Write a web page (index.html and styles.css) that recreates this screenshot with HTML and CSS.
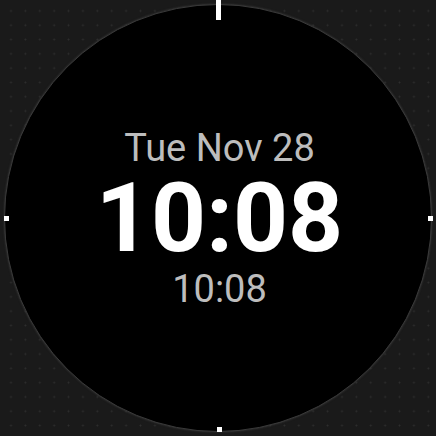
FILE: index.html
```html
<!DOCTYPE html>
<html>
<head>
<meta charset="utf-8">
<link rel="stylesheet" href="styles.css">
</head>
<body>
<div class="screen">
  <div class="face">
    <div class="date">Tue Nov 28</div>
    <div class="time">10:08</div>
    <div class="subtime">10:08</div>
  </div>
  <div class="tick tick-top"></div>
  <div class="tick tick-left"></div>
  <div class="tick tick-right"></div>
  <div class="tick tick-bottom"></div>
</div>
</body>
</html>
```
FILE: styles.css
```css
html, body {
  margin: 0;
  padding: 0;
  background: #1a1a1a;
}
.screen {
  position: relative;
  width: 436px;
  height: 436px;
  box-sizing: border-box;
  padding: 4px;
  background-color: #1a1a1a;
  background-image: radial-gradient(circle, #2e2e2e 0.8px, transparent 1.1px);
  background-size: 14.4px 14.3px;
  background-position: 3.8px 3.8px;
  font-family: Roboto, "Noto Sans", sans-serif;
}
.face {
  width: 428px;
  height: 428px;
  box-sizing: border-box;
  border-radius: 50%;
  background: #000;
  border: 1px solid #3a3a3a;
  box-shadow: 0 0 2px rgba(90, 90, 90, 0.5);
  display: flex;
  flex-direction: column;
  align-items: center;
  justify-content: center;
  padding-left: 3px;
}
.date {
  font-size: 38px;
  line-height: 38px;
  color: #bdbdbd;
}
.time {
  font-size: 96px;
  line-height: 96px;
  font-weight: 700;
  color: #ffffff;
  margin-top: 3px;
}
.subtime {
  font-size: 38px;
  line-height: 38px;
  color: #bdbdbd;
  margin-top: 4px;
}
.tick {
  position: absolute;
  background: #ffffff;
}
.tick-top {
  left: 216px;
  top: 0;
  width: 5px;
  height: 20px;
}
.tick-left {
  left: 4px;
  top: 216px;
  width: 5px;
  height: 5px;
}
.tick-right {
  left: 428px;
  top: 216px;
  width: 5px;
  height: 5px;
}
.tick-bottom {
  left: 217px;
  top: 427px;
  width: 5px;
  height: 5px;
}
```
